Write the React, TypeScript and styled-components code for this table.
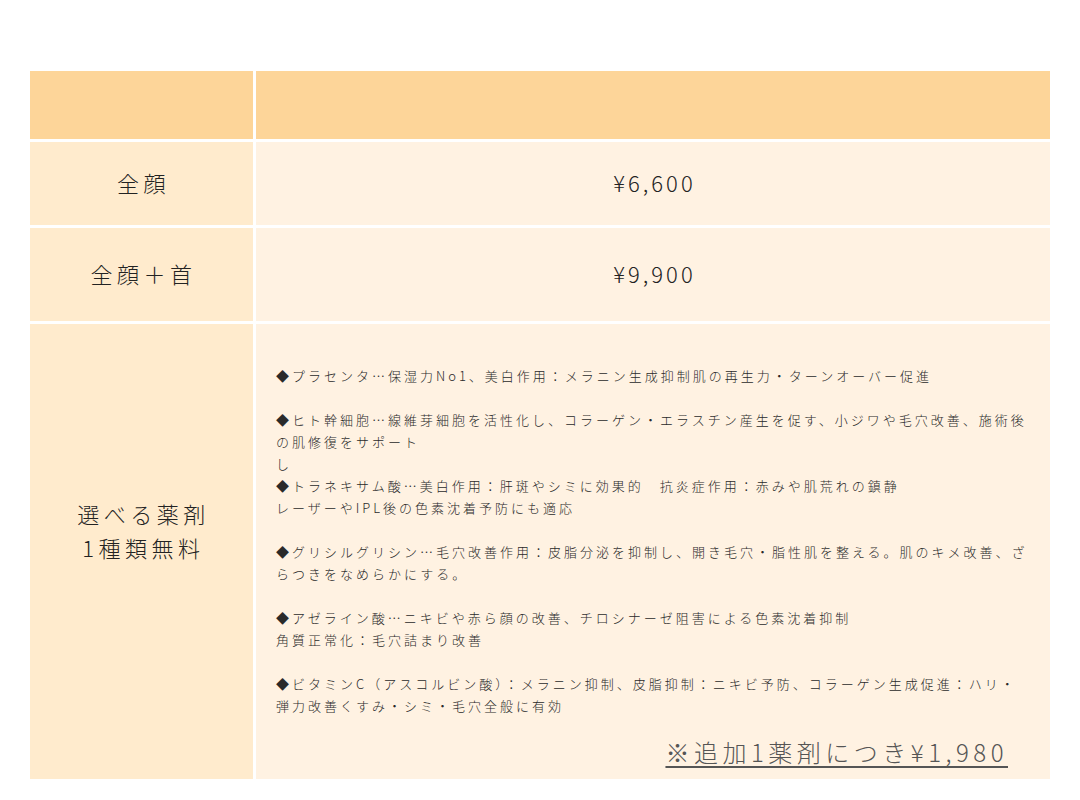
import styled, { createGlobalStyle } from "styled-components";

const GlobalStyle = createGlobalStyle`
  html, body {
    margin: 0;
    padding: 0;
    background: #ffffff;
  }
  body {
    font-family: "Noto Sans CJK JP", "Noto Sans", sans-serif;
    font-weight: 300;
    color: #222222;
  }
`;

const Page = styled.div`
  width: 1080px;
  height: 800px;
  padding: 71px 0 0 30px;
  box-sizing: border-box;
`;

const PriceTable = styled.div`
  display: grid;
  grid-template-columns: 223px 794px;
  grid-template-rows: 68px 83px 93px 455px;
  gap: 3px;
`;

const HeadCell = styled.div`
  background: #fdd599;
`;

const LabelCell = styled.div<{ $lift?: number }>`
  background: #ffebcd;
  display: flex;
  align-items: center;
  justify-content: center;
  text-align: center;
  padding-bottom: ${(p) => p.$lift ?? 4}px;
  padding-left: 4px;
  box-sizing: border-box;
  font-size: 22px;
  line-height: 34px;
  letter-spacing: 4.5px;
  color: #222;
`;

const ValueCell = styled.div<{ $align?: "center" | "top" }>`
  background: #fff2e2;
  display: flex;
  flex-direction: column;
  align-items: ${(p) => (p.$align === "top" ? "stretch" : "center")};
  justify-content: ${(p) => (p.$align === "top" ? "flex-start" : "center")};
  padding: ${(p) => (p.$align === "top" ? "41px 20px 0 20px" : "0 0 4px 3px")};
  box-sizing: border-box;
`;

const Price = styled.span`
  font-size: 22px;
  letter-spacing: 3px;
  color: #222;
`;

const Ingredients = styled.div`
  font-size: 13px;
  line-height: 22px;
  letter-spacing: 3px;
  color: #2a2a2a;
  white-space: nowrap;
`;

const Note = styled.div`
  margin-top: 18px;
  padding-right: 22px;
  text-align: right;
  font-size: 24px;
  line-height: 34px;
  letter-spacing: 4.5px;
  color: #555;
  text-decoration: underline;
  text-decoration-thickness: 2px;
  text-underline-offset: 4px;
`;

const lines = [
  "◆プラセンタ…保湿力No1、美白作用：メラニン生成抑制肌の再生力・ターンオーバー促進",
  "",
  "◆ヒト幹細胞…線維芽細胞を活性化し、コラーゲン・エラスチン産生を促す、小ジワや毛穴改善、施術後",
  "の肌修復をサポート",
  "し",
  "◆トラネキサム酸…美白作用：肝斑やシミに効果的　抗炎症作用：赤みや肌荒れの鎮静",
  "レーザーやIPL後の色素沈着予防にも適応",
  "",
  "◆グリシルグリシン…毛穴改善作用：皮脂分泌を抑制し、開き毛穴・脂性肌を整える。肌のキメ改善、ざ",
  "らつきをなめらかにする。",
  "",
  "◆アゼライン酸…ニキビや赤ら顔の改善、チロシナーゼ阻害による色素沈着抑制",
  "角質正常化：毛穴詰まり改善",
  "",
  "◆ビタミンC（アスコルビン酸）：メラニン抑制、皮脂抑制：ニキビ予防、コラーゲン生成促進：ハリ・",
  "弾力改善くすみ・シミ・毛穴全般に有効",
];

export default function App() {
  return (
    <>
      <GlobalStyle />
      <Page>
        <PriceTable>
          <HeadCell />
          <HeadCell />

          <LabelCell>全顔</LabelCell>
          <ValueCell>
            <Price>¥6,600</Price>
          </ValueCell>

          <LabelCell>全顔＋首</LabelCell>
          <ValueCell>
            <Price>¥9,900</Price>
          </ValueCell>

          <LabelCell $lift={44}>
            選べる薬剤
            <br />
            1種類無料
          </LabelCell>
          <ValueCell $align="top">
            <Ingredients>
              {lines.map((l, i) => (
                <div key={i}>{l || "\u00a0"}</div>
              ))}
            </Ingredients>
            <Note>※追加1薬剤につき¥1,980</Note>
          </ValueCell>
        </PriceTable>
      </Page>
    </>
  );
}
